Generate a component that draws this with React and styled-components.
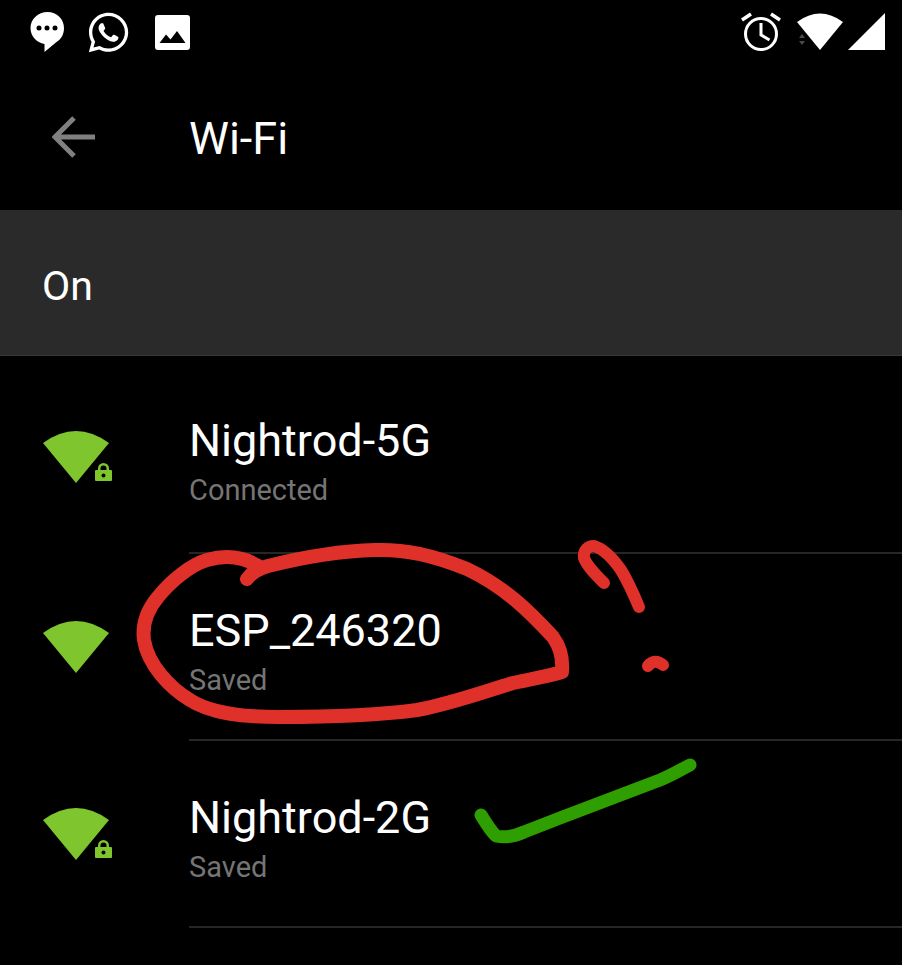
import styled, { createGlobalStyle } from "styled-components"
import { FaWhatsapp } from "react-icons/fa"

const networks = [
    { name: "Nightrod-5G", status: "Connected", locked: true },
    { name: "ESP_246320", status: "Saved", locked: false },
    { name: "Nightrod-2G", status: "Saved", locked: true },
]

const GlobalStyle = createGlobalStyle`
    html, body {
        margin: 0;
        background: #000;
    }
`

const Screen = styled.div`
    position: relative;
    width: 902px;
    height: 965px;
    overflow: hidden;
    background: #000;
    color: #fff;
    font-family: Roboto, "Liberation Sans", sans-serif;
`

const StatusBar = styled.div`
    height: 64px;
    display: flex;
    align-items: center;
    justify-content: space-between;
    padding: 0 17px 0 30px;
`

const StatusGroup = styled.div`
    display: flex;
    align-items: center;
    gap: ${props => props.$gap}px;
`

const Toolbar = styled.div`
    height: 146px;
    box-sizing: border-box;
    display: flex;
    align-items: center;
    padding-left: 52px;
`

const BackIcon = styled.svg`
    width: 44px;
    height: 42px;
    margin-right: 93px;
`

const Title = styled.h1`
    margin: 2px 0 0;
    font-size: 45px;
    font-weight: 400;
`

const SwitchBar = styled.div`
    height: 146px;
    box-sizing: border-box;
    display: flex;
    align-items: center;
    padding: 6px 0 0 42px;
    background: #2a2a2a;
    border-bottom: 1px solid #3a3a3a;
    font-size: 41px;
`

const List = styled.div`
    padding-top: 8px;
`

const Row = styled.div`
    height: 187px;
    display: flex;

    &:first-child {
        height: 190px;
    }
`

const SignalColumn = styled.div`
    width: 189px;
    flex-shrink: 0;
    box-sizing: border-box;
    padding: 66px 0 0 43px;
`

const Details = styled.div`
    flex: 1;
    display: flex;
    flex-direction: column;
    gap: 6px;
    border-bottom: 2px solid #262626;
    box-sizing: border-box;
    padding-top: 52px;
`

const Name = styled.div`
    font-size: 45px;
    line-height: 50px;
`

const Status = styled.div`
    font-size: 29px;
    line-height: 36px;
    color: #757575;
`

const Scribbles = styled.svg`
    position: absolute;
    inset: 0;
    pointer-events: none;
`

function WifiIcon({ locked }) {
    return (
        <svg width="70" height="54" viewBox="0 0 70 54">
            <path d="M33 53 L0 13 Q33 -11 66 13 Z" fill="#7fc52e" />
            {locked && (
                <path
                    fillRule="evenodd"
                    fill="#7fc52e"
                    d="M55 40v-1.500a5.500 5.500 0 0 1 11 0V40h2a1 1 0 0 1 1 1v9a1 1 0 0 1-1 1H53a1 1 0 0 1-1-1v-9a1 1 0 0 1 1-1zM57.500 40h6v-1.500a3 3 0 0 0-6 0zM60.500 43.500a2 2 0 1 0 0 4 2 2 0 0 0 0-4z"
                />
            )}
        </svg>
    )
}

export default function App() {
    return (
        <Screen>
            <GlobalStyle />
            <StatusBar>
                <StatusGroup $gap={21}>
                    <svg width="35" height="42" viewBox="0 0 35 42">
                        <path
                            fillRule="evenodd"
                            fill="#fff"
                            d="M17.500 1C8 1 .5 8 .5 17c0 8 6 14.500 14 16l0 8 12-10C31.500 28 34 23 34 17 34 8 27 1 17.500 1zM9 14.500a2.500 2.500 0 1 0 0 5 2.500 2.500 0 0 0 0-5zM17 14.500a2.500 2.500 0 1 0 0 5 2.500 2.500 0 0 0 0-5zM25 14.500a2.500 2.500 0 1 0 0 5 2.500 2.500 0 0 0 0-5z"
                        />
                    </svg>
                    <FaWhatsapp size={45} color="#fff" />
                    <svg width="35" height="35" viewBox="0 0 35 35" style={{ marginLeft: 3 }}>
                        <path
                            fillRule="evenodd"
                            fill="#fff"
                            d="M3 0h29a3 3 0 0 1 3 3v29a3 3 0 0 1-3 3H3a3 3 0 0 1-3-3V3a3 3 0 0 1 3-3zM4.500 28h26l-8.500-12-6.500 8.500-4.500-5z"
                        />
                    </svg>
                </StatusGroup>
                <StatusGroup $gap={5}>
                    <svg width="40" height="40" viewBox="0 0 40 40" style={{ marginRight: 11 }}>
                        <g fill="none" stroke="#fff" strokeWidth="3">
                            <circle cx="20" cy="22" r="15.500" />
                            <path d="M20 11v12l8.500 5" />
                            <path d="M1 8l9-6M39 8l-9-6" strokeWidth="3.500" />
                        </g>
                    </svg>
                    <svg width="46" height="38" viewBox="0 0 46 38">
                        <path d="M23 37 L0 9 Q23 -8 46 9 Z" fill="#fff" />
                        <path d="M2 25l3-4 3 4zM2 28l3 4 3-4z" fill="#4a4a4a" />
                    </svg>
                    <svg width="37" height="38" viewBox="0 0 37 38">
                        <path d="M0 37 L37 0 V37 Z" fill="#fff" />
                    </svg>
                </StatusGroup>
            </StatusBar>
            <Toolbar>
                <BackIcon viewBox="0 0 44 42">
                    <path d="M43 21H4M22 2 3 21l19 19" fill="none" stroke="#808080" strokeWidth="5" />
                </BackIcon>
                <Title>Wi-Fi</Title>
            </Toolbar>
            <SwitchBar>On</SwitchBar>
            <List>
                {networks.map(network => (
                    <Row key={network.name}>
                        <SignalColumn>
                            <WifiIcon locked={network.locked} />
                        </SignalColumn>
                        <Details>
                            <Name>{network.name}</Name>
                            <Status>{network.status}</Status>
                        </Details>
                    </Row>
                ))}
            </List>
            <Scribbles width="902" height="965" viewBox="0 0 902 965">
                <g fill="none" strokeLinecap="round" strokeLinejoin="round">
                    <path
                        stroke="#e0302a"
                        strokeWidth="14"
                        d="M247 579C252 572 258 569 268 566C300 558 335 551 375 550C405 549 432 555 467 569C505 587 530 612 553 637C561 648 563 660 562 672C545 677 530 679 513 683C480 693 450 704 417 710C380 715 330 717 280 717C240 717 210 713 190 700C170 688 148 665 144 640C142 625 147 610 158 597C170 582 190 565 207 560C225 555 242 556 258 566"
                    />
                    <path
                        stroke="#e0302a"
                        strokeWidth="12"
                        d="M604 583C595 574 587 566 584 558C583 550 588 546 594 546C604 549 614 560 621 570C629 583 634 595 639 607"
                    />
                    <path stroke="#e0302a" strokeWidth="12" d="M648 666C652 661 657 660 663 665" />
                    <path
                        stroke="#2f9e00"
                        strokeWidth="13"
                        d="M481 815C486 823 490 830 496 836C505 838 513 837 524 832C570 814 620 795 660 780C672 775 680 770 690 765"
                    />
                </g>
            </Scribbles>
        </Screen>
    )
}
